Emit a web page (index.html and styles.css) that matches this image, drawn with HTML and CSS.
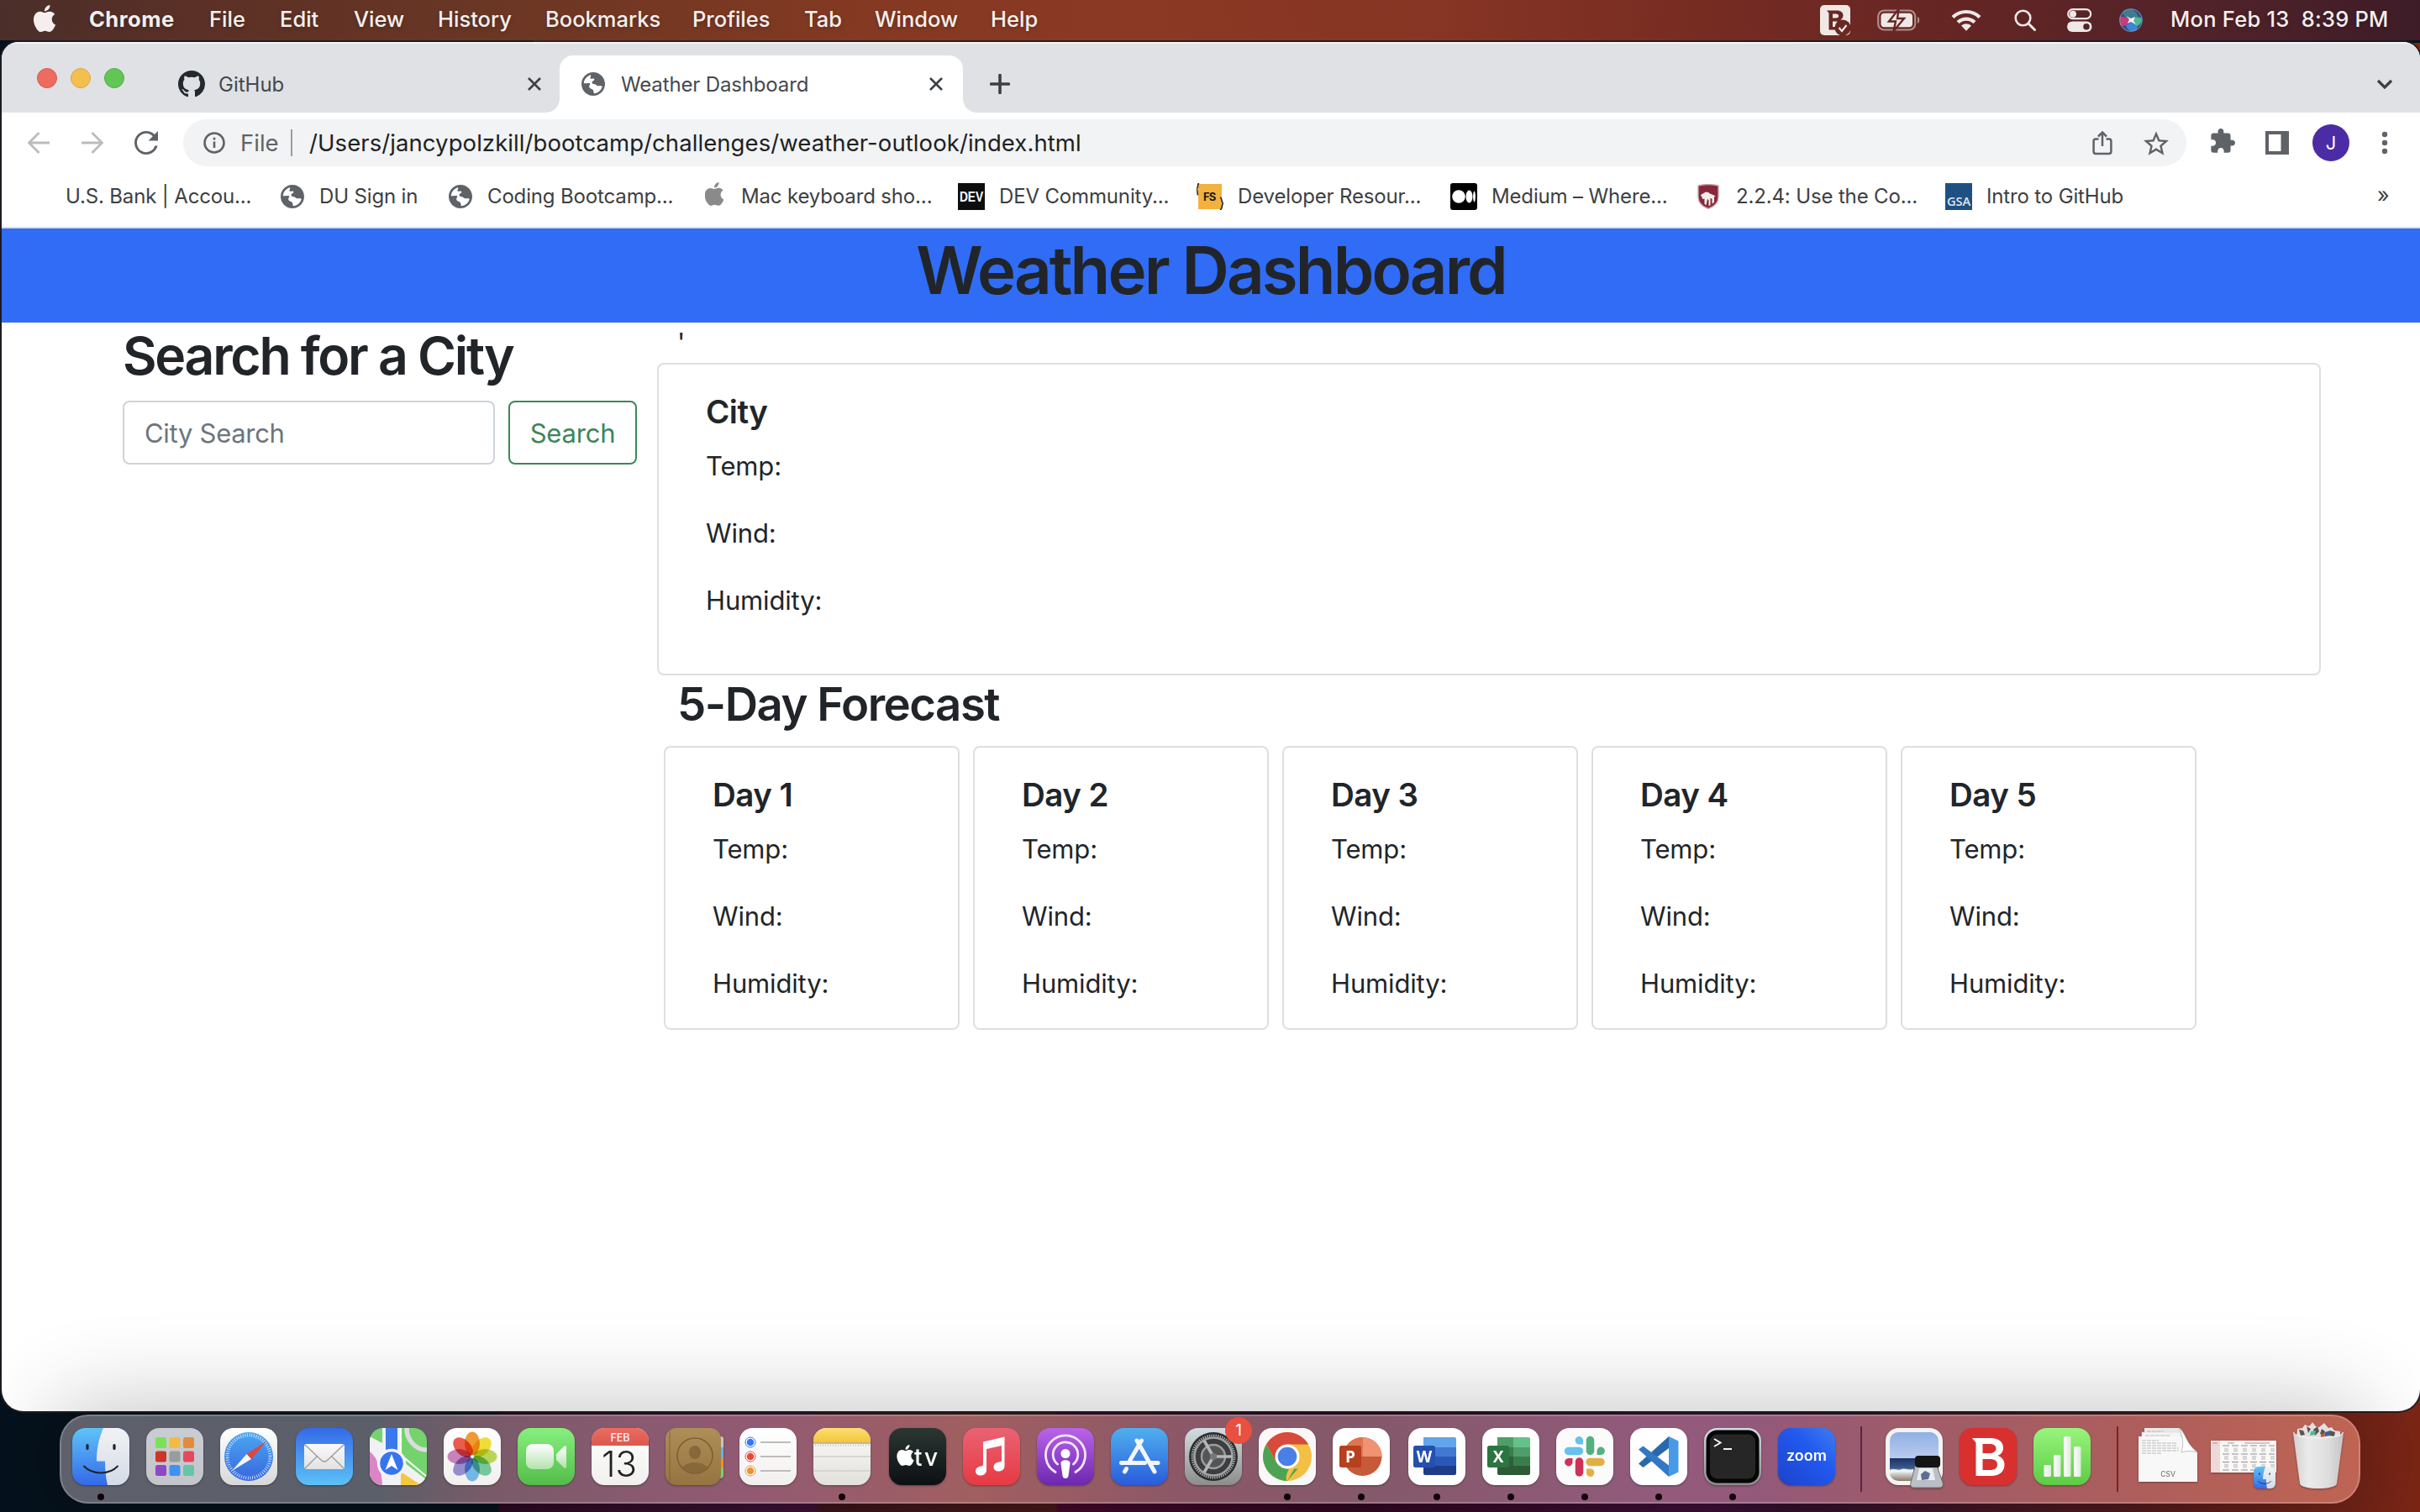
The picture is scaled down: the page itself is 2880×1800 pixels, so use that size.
FILE: index.html
```html
<!DOCTYPE html>
<html lang="en">
<head>
<meta charset="utf-8">
<title>Weather Dashboard</title>
<link rel="stylesheet" href="styles.css">
</head>
<body>
<svg class="defs" width="0" height="0" aria-hidden="true">
  <defs>
    <symbol id="apple" viewBox="0 0 24 24"><path d="M12.152 6.896c-.948 0-2.415-1.078-3.96-1.04-2.04.027-3.91 1.183-4.961 3.014-2.117 3.675-.546 9.103 1.519 12.09 1.013 1.454 2.208 3.09 3.792 3.039 1.52-.065 2.09-.987 3.935-.987 1.831 0 2.35.987 3.96.948 1.637-.026 2.676-1.48 3.676-2.948 1.156-1.688 1.636-3.325 1.662-3.415-.039-.013-3.182-1.221-3.22-4.857-.026-3.04 2.48-4.494 2.597-4.559-1.429-2.09-3.623-2.324-4.39-2.376-2-.156-3.675 1.09-4.61 1.09zM15.53 3.83c.843-1.012 1.4-2.427 1.245-3.83-1.207.052-2.662.805-3.532 1.818-.78.896-1.454 2.338-1.273 3.714 1.338.104 2.715-.688 3.559-1.701"/></symbol>
    <symbol id="globe" viewBox="2 2 20 20"><path d="M12 2C6.48 2 2 6.48 2 12s4.48 10 10 10 10-4.48 10-10S17.52 2 12 2zm.6 18c-.3-1.200-.2-2.100-.8-3-.7-1-2.300-.9-3-2-.5-.8-.2-1.800.4-2.400.5-.5.200-1.100-.6-1.300C7 11 5.600 11.500 4 11.500 4.200 8 6.600 5.200 9.800 4.300c.5.700.1 1.400-.3 2.100-.3.600.2 1.200.9 1.200.8 0 1.300-.4 2-.2.9.3.600 1.400-.1 1.800-.9.500-1.500 1-1.300 1.900.2.800 1.200.9 2.100 1 1.300.1 1.600 1.200 2.700 1.500.9.200 1.700-.3 2.600-.2.600.1.900.4 1.300.8-.9 3.300-3.700 5.600-7.100 5.800z"/></symbol>
    <symbol id="close" viewBox="0 0 16 16"><path d="M1 1l14 14M15 1L1 15" stroke="#3c4043" stroke-width="2.600" fill="none"/></symbol>
    <linearGradient id="finderL" x2="0" y2="1"><stop stop-color="#5ec4f8"/><stop offset="1" stop-color="#3469e8"/></linearGradient>
    <linearGradient id="finderR" x2="0" y2="1"><stop stop-color="#f2f2f4"/><stop offset="1" stop-color="#d3dbe6"/></linearGradient>
    <clipPath id="tile"><rect width="68" height="68" rx="15.500"/></clipPath>
    <clipPath id="orb"><circle cx="14" cy="14" r="14"/></clipPath>
    <symbol id="finder" viewBox="0 0 68 68">
      <g clip-path="url(#tile)"><rect width="68" height="68" fill="url(#finderL)"/><path d="M37 0C31 14 29 26 29 39.500h10C39 50 40 60 42 68h26V0z" fill="url(#finderR)"/></g>
      <g stroke="#1d2530" fill="none" stroke-linecap="round"><path d="M18 20.500v4M50 20.500v4" stroke-width="3.200"/><path d="M14 45.500c10 10.500 30 10.500 40 0" stroke-width="2"/></g>
    </symbol>
    <linearGradient id="gLaunch" x2="0" y2="1"><stop stop-color="#c9cdd2"/><stop offset="1" stop-color="#c4c5ca"/></linearGradient>
    <linearGradient id="gWhite" x2="0" y2="1"><stop stop-color="#fff"/><stop offset="1" stop-color="#d8d8d8"/></linearGradient>
    <linearGradient id="gPaper" x2="0" y2="1"><stop stop-color="#fff"/><stop offset="1" stop-color="#f1f0ee"/></linearGradient>
    <linearGradient id="gSafari" x2="0" y2="1"><stop stop-color="#4ba6f0"/><stop offset="1" stop-color="#3767df"/></linearGradient>
    <linearGradient id="gMail" x2="0" y2="1"><stop stop-color="#346ae9"/><stop offset="1" stop-color="#5dc1f6"/></linearGradient>
    <linearGradient id="gEnv" x2="0" y2="1"><stop stop-color="#fafafa"/><stop offset="1" stop-color="#e2e2e2"/></linearGradient>
    <linearGradient id="gFace" x2="0" y2="1"><stop stop-color="#86ef7e"/><stop offset="1" stop-color="#54bd4a"/></linearGradient>
    <linearGradient id="gCam" x2="0" y2="1"><stop stop-color="#fff"/><stop offset="1" stop-color="#b4e2ad"/></linearGradient>
    <linearGradient id="gRed" x2="0" y2="1"><stop stop-color="#ed6b60"/><stop offset="1" stop-color="#d9594e"/></linearGradient>
    <linearGradient id="gContacts" x2="0" y2="1"><stop stop-color="#ae8e59"/><stop offset="1" stop-color="#96743f"/></linearGradient>
    <linearGradient id="gNotes" x2="0" y2="1"><stop stop-color="#fbdf72"/><stop offset="1" stop-color="#f4c437"/></linearGradient>
    <linearGradient id="gNotePaper" x2="0" y2="1"><stop stop-color="#fafaf8"/><stop offset="1" stop-color="#e2e1dc"/></linearGradient>
    <linearGradient id="gTv" x2="0" y2="1"><stop stop-color="#2b3632"/><stop offset="1" stop-color="#0c1013"/></linearGradient>
    <linearGradient id="gMusic" x2="0" y2="1"><stop stop-color="#ea6273"/><stop offset="1" stop-color="#e63a42"/></linearGradient>
    <linearGradient id="gPod" x2="0" y2="1"><stop stop-color="#b964ea"/><stop offset="1" stop-color="#6d27ae"/></linearGradient>
    <linearGradient id="gStore" x2="0" y2="1"><stop stop-color="#4fb0ee"/><stop offset="1" stop-color="#2a5bdc"/></linearGradient>
    <linearGradient id="gGear" x2="0" y2="1"><stop stop-color="#d3dde2"/><stop offset="1" stop-color="#8d8d8b"/></linearGradient>
    <linearGradient id="gZoom" x1="1" x2="0" y2="1"><stop stop-color="#3f7ef0"/><stop offset=".4" stop-color="#2259ee"/><stop offset="1" stop-color="#1c43ca"/></linearGradient>
    <linearGradient id="gNum" x2="0" y2="1"><stop stop-color="#98f57c"/><stop offset="1" stop-color="#5ccb45"/></linearGradient>
    <linearGradient id="gBar" x2="1" y2="0"><stop stop-color="#fff"/><stop offset="1" stop-color="#dcebd9"/></linearGradient>
    <linearGradient id="gSky" x2="0" y2="1"><stop stop-color="#8fb0e4"/><stop offset=".53" stop-color="#b9cbee"/><stop offset=".54" stop-color="#1c3363"/><stop offset=".74" stop-color="#3b5a8c"/><stop offset=".82" stop-color="#dfe4e6"/><stop offset="1" stop-color="#8a7a64"/></linearGradient>
    <linearGradient id="gTrash" x2="1" y2="0"><stop stop-color="#d2d0d0"/><stop offset=".3" stop-color="#ebebeb"/><stop offset=".7" stop-color="#dedddd"/><stop offset="1" stop-color="#c6c4c4"/></linearGradient>
  </defs>
</svg>

<div class="desktop">
  <header class="menubar">
    <svg class="menu-apple" viewBox="2.500 0 19 24"><use href="#apple" width="24" height="24"/></svg>
    <b>Chrome</b><span>File</span><span>Edit</span><span>View</span><span>History</span><span>Bookmarks</span><span>Profiles</span><span>Tab</span><span>Window</span><span>Help</span>
    <svg class="status" width="36" height="36" viewBox="0 0 36 36"><rect width="36" height="36" rx="5" fill="#efe8e6"/><path fill-rule="evenodd" fill="#6a2823" d="M8 6.500h12c5 0 7.500 2.500 7.500 6 0 2.300-1.300 4-3.200 4.800 2.900.8 4.400 2.900 4.400 5.500 0 4.200-3 6.700-8 6.700H10.500V9.500zM15 10.500v5h4c2 0 3.200-.9 3.200-2.500s-1.200-2.500-3.200-2.500zM15 19.500V26h4.500c2.300 0 3.800-1.200 3.800-3.200s-1.500-3.300-3.800-3.300z"/><circle cx="27" cy="27" r="9.500" fill="#6a2823"/><path d="M22.500 27l3.500 4 5.500-7" fill="none" stroke="#efe8e6" stroke-width="2.200"/></svg>
    <svg class="status" width="52" height="26" viewBox="0 0 52 26"><rect x="1.200" y="1.500" width="44" height="23" rx="7" fill="none" stroke="#b08d88" stroke-width="2.200"/><rect x="4.500" y="4.800" width="37.500" height="16.400" rx="4" fill="#efe8e6"/><path d="M48 9c3 1 3 7 0 8z" fill="#b08d88"/><path d="M25.500 0L14 14.500h8L19.500 26 32 11h-8z" fill="#efe8e6" stroke="#642523" stroke-width="2.400"/></svg>
    <svg class="status" width="36" height="26" viewBox="0 0 36 26"><g fill="none" stroke="#efe8e6" stroke-width="4.200"><path d="M2 9.500a23 23 0 0 1 32 0"/><path d="M8 15.600a14.500 14.500 0 0 1 20 0"/></g><path d="M12 19.500a9 9 0 0 1 12 0l-6 6.200z" fill="#efe8e6"/></svg>
    <svg class="status" width="26" height="26" viewBox="0 0 26 26"><circle cx="10.500" cy="10.500" r="8.800" fill="none" stroke="#efe8e6" stroke-width="2.600"/><path d="M17 17l7.500 7.500" stroke="#efe8e6" stroke-width="3" stroke-linecap="round"/></svg>
    <svg class="status" width="30" height="28" viewBox="0 0 30 28"><rect x="1.200" y="1.200" width="27" height="11" rx="5.500" fill="none" stroke="#efe8e6" stroke-width="2.200"/><circle cx="7" cy="6.700" r="4" fill="#efe8e6"/><rect y="15.500" width="29.500" height="12.500" rx="6.200" fill="#efe8e6"/><circle cx="23" cy="21.700" r="3.800" fill="#57232a"/></svg>
    <svg class="status" width="28" height="28" viewBox="0 0 28 28"><g clip-path="url(#orb)"><rect width="28" height="28" fill="#324f86"/><path d="M0 10c5-1 10 1 14 4-3 6-9 8-13 6z" fill="#c83d78"/><path d="M4 2c10-4 16 1 19 8-4 3-8 4-11 3C7 10 4 8 4 2z" fill="#3f7c8c"/><path d="M8 20c4-1 6-4 7-6 5 1 8 5 6 12-6 3-11 0-13-6z" fill="#3d86d6"/><path d="M15 13c4-3 8-3 12-1 0 5-3 8-6 9-3-2-5-5-6-8z" fill="#4fb893"/></g><path d="M8 9l6 3 5-2-2 5 3 4-6-3-4 2 2-5z" fill="#fff" opacity=".9"/><circle cx="14" cy="14" r="13.300" fill="none" stroke="#7c8fb0" stroke-width="1"/></svg>
    <span class="clock">Mon Feb 13&nbsp; 8:39 PM</span>
  </header>

  <main class="window">
    <div class="tabstrip">
      <div class="lights"><i class="red"></i><i class="amber"></i><i class="green"></i></div>
      <div class="tab">
        <svg width="32" height="32" viewBox="0 0 16 16" fill="#24292f"><path d="M8 0C3.580 0 0 3.580 0 8c0 3.540 2.290 6.530 5.470 7.590.4.070.55-.17.55-.38 0-.19-.01-.82-.01-1.490-2.010.37-2.530-.49-2.690-.94-.09-.23-.48-.94-.82-1.130-.28-.15-.68-.52-.01-.53.630-.01 1.080.58 1.230.82.720 1.210 1.870.87 2.330.66.070-.52.280-.87.510-1.070-1.780-.2-3.640-.89-3.640-3.950 0-.87.310-1.590.820-2.150-.08-.2-.36-1.020.080-2.120 0 0 .67-.21 2.200.82.640-.18 1.320-.27 2-.27s1.360.09 2 .27c1.530-1.040 2.200-.82 2.200-.82.440 1.100.160 1.920.080 2.120.510.560.820 1.270.820 2.150 0 3.070-1.870 3.750-3.650 3.950.290.250.540.730.540 1.480 0 1.070-.01 1.930-.01 2.200 0 .210.150.460.550.380A8.010 8.010 0 0 0 16 8c0-4.420-3.580-8-8-8z"/></svg>
        <span class="tab-title">GitHub</span>
        <svg width="16" height="16"><use href="#close"/></svg>
      </div>
      <div class="tab active">
        <svg width="28" height="28" fill="#5f6368"><use href="#globe"/></svg>
        <span class="tab-title">Weather Dashboard</span>
        <svg width="16" height="16"><use href="#close"/></svg>
      </div>
      <svg class="plus" width="24" height="24" viewBox="0 0 24 24"><path d="M12 1.500v21M1.500 12h21" stroke="#3c4043" stroke-width="3.600" stroke-linecap="round"/></svg>
      <svg class="chevron" width="20" height="12" viewBox="0 0 20 12"><path d="M2 2l8 8 8-8" fill="none" stroke="#3c4043" stroke-width="3.200"/></svg>
    </div>

    <div class="toolbar">
      <svg width="28" height="28" viewBox="0 0 28 28"><path d="M27 14H3M14.500 2L2.500 14l12 12" fill="none" stroke="#babcbe" stroke-width="2.800"/></svg>
      <svg width="28" height="28" viewBox="0 0 28 28"><path d="M1 14h24M13.500 2l12 12-12 12" fill="none" stroke="#babcbe" stroke-width="2.800"/></svg>
      <svg width="28" height="28" viewBox="4 4 16 16"><path fill="#5f6368" d="M17.650 6.350A7.950 7.950 0 0 0 12 4c-4.420 0-7.990 3.580-7.990 8s3.570 8 7.990 8c3.730 0 6.840-2.550 7.730-6h-1.780A6.280 6.280 0 0 1 12 18.400c-3.500 0-6.300-2.890-6.300-6.400s2.800-6.400 6.300-6.400c1.760 0 3.340.79 4.420 1.980L13.500 10.500H20V4l-2.350 2.350z"/></svg>
      <div class="omnibox">
        <svg width="26" height="26" viewBox="0 0 26 26" fill="none" stroke="#5f6368" stroke-width="2.600"><circle cx="13" cy="13" r="11.500"/><path d="M13 11.500v7.500M13 6.800v2.800"/></svg>
        <span class="scheme">File</span>
        <i class="divider"></i>
        <span class="url">/Users/jancypolzkill/bootcamp/challenges/weather-outlook/index.html</span>
        <svg width="24" height="30" viewBox="0 0 24 30" fill="none" stroke="#5f6368" stroke-width="2.500"><path d="M7.500 10.500H4a2.400 2.400 0 0 0-2.400 2.400v12.700A2.400 2.400 0 0 0 4 28h16a2.400 2.400 0 0 0 2.400-2.400V12.900A2.400 2.400 0 0 0 20 10.500h-3.500M12 19V3M7 7.500l5-5 5 5"/></svg>
        <svg width="30" height="29" viewBox="2 2 20 19" fill="#5f6368"><path d="M22 9.240l-7.190-.62L12 2 9.190 8.630 2 9.240l5.460 4.730L5.820 21 12 17.270 18.180 21l-1.630-7.030L22 9.240zM12 15.400l-3.760 2.270 1-4.280-3.320-2.880 4.380-.38L12 6.100l1.710 4.040 4.380.38-3.320 2.880 1 4.280L12 15.400z"/></svg>
      </div>
      <svg class="puzzle" width="30" height="30" viewBox="1 1 22 22" fill="#5f6368"><path d="M20.500 11H19V7c0-1.100-.9-2-2-2h-4V3.500C13 2.120 11.880 1 10.500 1S8 2.120 8 3.500V5H4c-1.100 0-1.990.9-1.990 2v3.800H3.500c1.490 0 2.700 1.210 2.700 2.700s-1.210 2.700-2.700 2.700H2V20c0 1.100.9 2 2 2h3.800v-1.500c0-1.490 1.210-2.700 2.700-2.700 1.490 0 2.700 1.210 2.700 2.700V22H17c1.100 0 2-.9 2-2v-4h1.500c1.380 0 2.500-1.120 2.500-2.500S21.880 11 20.500 11z"/></svg>
      <svg width="28" height="28" viewBox="0 0 28 28"><path fill-rule="evenodd" fill="#5f6368" d="M0 0h28v28H0zM4 4v20h14.500V4z"/></svg>
      <span class="avatar">J</span>
      <svg width="8" height="28" viewBox="0 0 8 28" fill="#5f6368"><circle cx="4" cy="4" r="3.200"/><circle cx="4" cy="14" r="3.200"/><circle cx="4" cy="24" r="3.200"/></svg>
    </div>

    <nav class="bookmarks">
      <span>U.S. Bank | Accou...</span>
      <svg width="30" height="28" fill="#5f6368"><use href="#globe"/></svg><span>DU Sign in</span>
      <svg width="30" height="28" fill="#5f6368"><use href="#globe"/></svg><span>Coding Bootcamp...</span>
      <svg class="bm-apple" width="22" height="28" viewBox="2.500 0 19 24" fill="#8a8a8a"><use href="#apple" width="24" height="24"/></svg><span>Mac keyboard sho...</span>
      <svg width="32" height="32" viewBox="0 0 32 32"><rect width="32" height="32" fill="#0c0d0e"/><text x="2" y="22" textLength="28" lengthAdjust="spacingAndGlyphs" font-family="Liberation Sans" font-weight="700" font-size="17" fill="#fff">DEV</text></svg><span>DEV Community...</span>
      <svg width="32" height="32" viewBox="0 0 32 32"><rect x="2" y="1" width="28" height="30" fill="#f3b13e"/><path d="M3 0C0 1 3 5 0 7c2 2 0 6 2 7M28 17c3 1 1 5 3.500 7-2 2 0 6-3.500 8" fill="none" stroke="#222" stroke-width="1.600"/><text x="8" y="21" font-family="Inter" font-weight="700" font-size="13" textLength="15" fill="#1b1b1b">FS</text></svg><span>Developer Resour...</span>
      <svg width="32" height="32" viewBox="0 0 32 32"><rect width="32" height="32" rx="3"/><g fill="#fff"><circle cx="10" cy="16" r="7.800"/><ellipse cx="22.500" cy="16" rx="4" ry="7.400"/><ellipse cx="28.500" cy="16" rx="1.400" ry="6.500"/></g></svg><span>Medium – Where...</span>
      <svg width="26" height="30" viewBox="0 0 26 30"><path d="M1 2C8 .2 18 .2 25 2v13c0 7-5 12-12 14.500C6 27 1 22 1 15z" fill="#86283a" stroke="#c9a7ac" stroke-width="1.400"/><path d="M4 13l6-3.500 3 .5 2 1.500 7 3-2 .8v6.500l-2.500 2v-6l-2-1v8.500l-2 1v-7l-1.500-1.500-1.500 7.500-2-1.500v-6.500l-2 1z" fill="#f3eeee"/></svg><span>2.2.4: Use the Co...</span>
      <svg width="32" height="32" viewBox="0 0 32 32"><rect width="32" height="32" fill="#1f5083"/><text x="2" y="27" textLength="28" lengthAdjust="spacingAndGlyphs" font-family="Open Sans" font-weight="600" font-size="14.500" fill="#dfe8f0">GSA</text></svg><span>Intro to GitHub</span>
      <span class="more">»</span>
    </nav>

    <section class="page">
      <h1>Weather Dashboard</h1>
      <div class="columns">
        <div class="search">
          <h2>Search for a City</h2>
          <form class="search-form">
            <input type="text" placeholder="City Search">
            <button type="button">Search</button>
          </form>
        </div>
        <div class="results">
          <div class="stray">'</div>
          <article class="card current"><h5>City</h5><p>Temp:</p><p>Wind:</p><p>Humidity:</p></article>
          <h3>5-Day Forecast</h3>
          <div class="forecast">
            <article class="card"><h5>Day 1</h5><p>Temp:</p><p>Wind:</p><p>Humidity:</p></article>
            <article class="card"><h5>Day 2</h5><p>Temp:</p><p>Wind:</p><p>Humidity:</p></article>
            <article class="card"><h5>Day 3</h5><p>Temp:</p><p>Wind:</p><p>Humidity:</p></article>
            <article class="card"><h5>Day 4</h5><p>Temp:</p><p>Wind:</p><p>Humidity:</p></article>
            <article class="card"><h5>Day 5</h5><p>Temp:</p><p>Wind:</p><p>Humidity:</p></article>
          </div>
        </div>
      </div>
    </section>
  </main>

  <footer class="dock">
    <div class="app running"><svg viewBox="0 0 68 68"><use href="#finder"/></svg></div>
    <div class="app"><svg viewBox="0 0 68 68"><rect width="68" height="68" rx="15.500" fill="url(#gLaunch)"/><rect x="11" y="11" width="13" height="13" rx="2.500" fill="#79e355"/><rect x="27.500" y="11" width="13" height="13" rx="2.500" fill="#f2bb42"/><rect x="44" y="11" width="13" height="13" rx="2.500" fill="#e38b38"/><rect x="11" y="27.500" width="13" height="13" rx="2.500" fill="#cc3527"/><rect x="27.500" y="27.500" width="13" height="13" rx="2.500" fill="#979c9d"/><rect x="44" y="27.500" width="13" height="13" rx="2.500" fill="#e8485d"/><rect x="11" y="44" width="13" height="13" rx="2.500" fill="#9046c6"/><rect x="27.500" y="44" width="13" height="13" rx="2.500" fill="#3d94f0"/><rect x="44" y="44" width="13" height="13" rx="2.500" fill="#65c5a5"/></svg></div>
    <div class="app"><svg viewBox="0 0 68 68"><rect width="68" height="68" rx="15.500" fill="url(#gWhite)"/><circle cx="34" cy="34" r="29" fill="url(#gSafari)"/><circle cx="34" cy="34" r="25.500" fill="none" stroke="#d4e8fb" stroke-width="4" stroke-dasharray=".9 1.770"/><path d="M55 16L31.500 31l5.500 6z" fill="#e2453a"/><path d="M14 51l17.500-20 5.500 6z" fill="#f4f6f8"/></svg></div>
    <div class="app shift"><svg viewBox="0 0 68 68"><rect width="68" height="68" rx="15.500" fill="url(#gMail)"/><rect x="10" y="19" width="48" height="30" rx="3" fill="url(#gEnv)"/><path d="M11 20l19 18c2.500 2.500 5.500 2.500 8 0l19-18M11 48l14-14M57 48L43 34" fill="none" stroke="#9c9c9c" stroke-width="1.300"/></svg></div>
    <div class="app"><svg viewBox="0 0 68 68"><g clip-path="url(#tile)"><rect width="68" height="68" fill="#74d36c"/><path d="M0 10l15 8V0h22v38l31 24v6H0z" fill="#f1f1f3"/><path d="M0 28c10 8 14 22 15 40H0z" fill="#dd83c8"/><path d="M37 52l24 16H37z" fill="#f4c83e"/><path d="M19 0h14v36H19z" fill="#3a79ec"/><path d="M44 0c0 14 10 26 24 26" fill="none" stroke="#dcdce0" stroke-width="5.500"/><path d="M37 0v32l31 26" fill="none" stroke="#fff" stroke-width="2"/></g><circle cx="26" cy="42" r="15.500" fill="#3774ee" stroke="#f2f3f6" stroke-width="3.500"/><path d="M26 31l7.500 19-7.500-5-7.500 5z" fill="#fff"/></svg></div>
    <div class="app"><svg viewBox="0 0 68 68"><rect width="68" height="68" rx="15.500" fill="url(#gPaper)"/><g class="petals"><ellipse cx="34" cy="18.500" rx="9" ry="14" fill="#f09a34"/><ellipse cx="34" cy="18.500" rx="9" ry="14" fill="#efdc3a" transform="rotate(45 34 34)"/><ellipse cx="34" cy="18.500" rx="9" ry="14" fill="#b9d558" transform="rotate(90 34 34)"/><ellipse cx="34" cy="18.500" rx="9" ry="14" fill="#76c79a" transform="rotate(135 34 34)"/><ellipse cx="34" cy="18.500" rx="9" ry="14" fill="#74b6e6" transform="rotate(180 34 34)"/><ellipse cx="34" cy="18.500" rx="9" ry="14" fill="#988dcc" transform="rotate(225 34 34)"/><ellipse cx="34" cy="18.500" rx="9" ry="14" fill="#c782bc" transform="rotate(270 34 34)"/><ellipse cx="34" cy="18.500" rx="9" ry="14" fill="#ea5c4e" transform="rotate(315 34 34)"/></g><circle cx="34" cy="34" r="1.700" fill="#fff"/></svg></div>
    <div class="app"><svg viewBox="0 0 68 68"><rect width="68" height="68" rx="15.500" fill="url(#gFace)"/><rect x="10" y="19" width="33" height="30" rx="8" fill="url(#gCam)"/><path d="M46 31l9-9c1.500-1.500 3-1 3 1v23c0 2-1.500 2.500-3 1l-9-9z" fill="url(#gCam)"/></svg></div>
    <div class="app"><svg viewBox="0 0 68 68"><rect width="68" height="68" rx="15.500" fill="url(#gPaper)"/><path d="M0 21v-5.500A15.500 15.500 0 0 1 15.500 0h37A15.500 15.500 0 0 1 68 15.500V21z" fill="url(#gRed)"/><text x="34" y="16" text-anchor="middle" font-family="Inter" font-weight="600" font-size="12.500" fill="#fbe9e7">FEB</text><text x="33" y="57.500" text-anchor="middle" font-family="Inter" font-weight="300" font-size="42" textLength="42" lengthAdjust="spacingAndGlyphs" fill="#222">13</text></svg></div>
    <div class="app"><svg viewBox="0 0 70 68"><path d="M60 10h6a3 3 0 0 1 3 3v10h-9z" fill="#c9c6bf"/><path d="M60 23h9v13h-9z" fill="#5db5ee"/><path d="M60 36h9v12h-9z" fill="#ee8f2f"/><path d="M60 48h9v8a4 4 0 0 1-4 4h-5z" fill="#72d374"/><rect width="66" height="68" rx="13" fill="url(#gContacts)"/><path d="M5 4v60" stroke="#846535"/><circle cx="35" cy="33" r="21" fill="none" stroke="#7d5f30" stroke-width="1.500"/><ellipse cx="35" cy="29" rx="7" ry="8" fill="#87683a"/><path d="M20 47c6-8 24-8 30 0-7 9-23 9-30 0z" fill="#87683a"/></svg></div>
    <div class="app tight"><svg viewBox="0 0 68 68"><rect width="68" height="68" rx="15.500" fill="url(#gPaper)"/><g stroke="#fff" stroke-width="1.500"><circle cx="13" cy="17" r="5" fill="#3478f6"/><circle cx="13" cy="34" r="5" fill="#e5493a"/><circle cx="13" cy="51" r="5" fill="#ec9431"/></g><g fill="none" stroke-width="1"><circle cx="13" cy="17" r="6" stroke="#3478f6"/><circle cx="13" cy="34" r="6" stroke="#e5493a"/><circle cx="13" cy="51" r="6" stroke="#ec9431"/></g><path d="M25 17h36M25 34h36M25 51h36" stroke="#bdbdbd" stroke-width="1.800"/></svg></div>
    <div class="app running"><svg viewBox="0 0 68 68"><rect width="68" height="68" rx="15.500" fill="url(#gNotePaper)"/><path d="M0 17.500v-2A15.500 15.500 0 0 1 15.500 0h37A15.500 15.500 0 0 1 68 15.500v2z" fill="url(#gNotes)"/><path d="M0 18h68" stroke="#b0a98e" stroke-width="1.300"/><path d="M2 20.500h64" stroke="#b5b5b2" stroke-width="1.500" stroke-dasharray="1 2"/><path d="M0 34h68M0 51h68" stroke="#cfcfd0" stroke-width="1.500"/></svg></div>
    <div class="app shift"><svg viewBox="0 0 68 68"><rect width="68" height="68" rx="15.500" fill="url(#gTv)"/><svg x="9" y="20" width="21" height="25" viewBox="2.500 0 19 24" fill="#fff"><use href="#apple" width="24" height="24"/></svg><text x="30" y="44.500" textLength="28" font-family="Inter" font-weight="500" font-size="28" fill="#fff">tv</text></svg></div>
    <div class="app"><svg viewBox="0 0 68 68"><rect width="68" height="68" rx="15.500" fill="url(#gMusic)"/><path d="M24 16.500L49.500 10.500V45c0 4-3 6.500-7 6.500-3.500 0-6-2-6-5 0-3.500 2.500-5.500 6.500-6 2.500-.4 3-.8 3-2.800V21l-18 4v25c0 4-3 6.500-7 6.500-3.500 0-6-2-6-5 0-3.500 2.500-5.500 6.500-6 2-.3 2.500-1 2.500-2.800z" fill="#fff"/></svg></div>
    <div class="app"><svg viewBox="0 0 68 68"><rect width="68" height="68" rx="15.500" fill="url(#gPod)"/><g fill="none" stroke="#f2e6fb" stroke-width="2.800" stroke-linecap="round"><path d="M22 52.500a23.500 23.500 0 1 1 24 0"/><path d="M24.500 43a14.800 14.800 0 1 1 19 0"/></g><circle cx="34" cy="30.500" r="5.500" fill="#fff"/><path d="M28.500 42c0-5 11-5 11 0l-2 15c-.5 4-6.500 4-7 0z" fill="#fff"/></svg></div>
    <div class="app"><svg viewBox="0 0 68 68"><rect width="68" height="68" rx="15.500" fill="url(#gStore)"/><g stroke="#f1f6fc" stroke-width="5" stroke-linecap="round"><path d="M36.500 15L22.500 39M31 15l21 37M12.500 41.500h28M47 41.500h9M18.500 48.500l-2 3.500"/></g></svg></div>
    <div class="app"><svg viewBox="0 0 68 68"><rect width="68" height="68" rx="15.500" fill="url(#gGear)"/><circle cx="34" cy="34" r="29" fill="#2a2b2b"/><circle cx="34" cy="34" r="25" fill="none" stroke="#a9adaf" stroke-width="3" stroke-dasharray="1.400 1.200"/><circle cx="34" cy="34" r="22.500" fill="#3c3d3e" stroke="#9fa3a5" stroke-width="2.500"/><circle cx="34" cy="34" r="14" fill="#555" stroke="#999d9f" stroke-width="2.500"/><path d="M34 34h22M34 34L23 15M34 34L23 53" stroke="#b4b8ba" stroke-width="3.500"/><circle cx="34" cy="34" r="4" fill="#777"/></svg><span class="badge">1</span></div>
    <div class="app running"><svg viewBox="0 0 68 68"><rect width="68" height="68" rx="15.500" fill="#f9f7f7"/><circle cx="34" cy="34" r="29" fill="#f3c043"/><path d="M8.900 19.500A29 29 0 0 1 59.100 19.500H34l-12.600 21.800z" fill="#d84b3c"/><path d="M8.900 19.500L21.400 41.300 34 48.500h12.600L34 63A29 29 0 0 1 8.900 19.500z" fill="#4ea352"/><path d="M46.600 41.300L34 63c-3-3-1-8 2-14.500z" fill="#f3c043"/><circle cx="34" cy="34" r="14.500" fill="#fff"/><circle cx="34" cy="34" r="11.300" fill="#4a7fe8"/></svg></div>
    <div class="app running"><svg viewBox="0 0 68 68"><rect width="68" height="68" rx="15.500" fill="#fff"/><circle cx="35.500" cy="34" r="23" fill="#c65a39"/><path d="M35.500 34V11a23 23 0 0 1 23 23z" fill="#ef9372"/><path d="M35.500 34V11a23 23 0 0 0-23 23z" fill="#df7450"/><rect x="8" y="21" width="26" height="26" rx="2.500" fill="#b7401f"/><text x="21" y="41" text-anchor="middle" font-family="Open Sans" font-weight="700" font-size="19" fill="#fff">P</text></svg></div>
    <div class="app running shift"><svg viewBox="0 0 68 68"><rect width="68" height="68" rx="15.500" fill="#fff"/><path d="M18 11h37a2 2 0 0 1 2 2v10H18z" fill="#62a5ea"/><path d="M18 23h39v11H18z" fill="#4178d0"/><path d="M18 34h39v11H18z" fill="#2b57b8"/><path d="M18 45h39v9a2 2 0 0 1-2 2H20a2 2 0 0 1-2-2z" fill="#1e3c89"/><rect x="6" y="21" width="26" height="26" rx="2.500" fill="#2450af"/><text x="19" y="41" text-anchor="middle" font-family="Open Sans" font-weight="700" font-size="19" fill="#fff">W</text></svg></div>
    <div class="app running"><svg viewBox="0 0 68 68"><rect width="68" height="68" rx="15.500" fill="#fff"/><path d="M18 11h19v12H18z" fill="#4f9e6a"/><path d="M37 11h18a2 2 0 0 1 2 2v10H37z" fill="#65c18a"/><path d="M18 23h19v11H18z" fill="#377e4b"/><path d="M37 23h20v11H37z" fill="#4f9e6a"/><path d="M18 34h19v11H18z" fill="#2f5f3b"/><path d="M37 34h20v11H37z" fill="#377e4b"/><path d="M18 45h39v9a2 2 0 0 1-2 2H20a2 2 0 0 1-2-2z" fill="#2f5a38"/><rect x="6" y="21" width="26" height="26" rx="2.500" fill="#2c7440"/><text x="19" y="41" text-anchor="middle" font-family="Open Sans" font-weight="700" font-size="19" fill="#fff">X</text></svg></div>
    <div class="app running"><svg viewBox="0 0 68 68"><rect width="68" height="68" rx="15.500" fill="#fcfbfb"/><g stroke-width="9.500" stroke-linecap="round"><path d="M14.500 27.500h13" stroke="#67c1ec"/><path d="M40.500 14.500v13" stroke="#54b080"/><path d="M40 40.500h13" stroke="#e0b045"/><path d="M27.500 40v13" stroke="#cf3058"/></g><path d="M32 19.500V14.500a4.700 4.700 0 1 0-4.700 5z" fill="#67c1ec"/><path d="M48.500 32h5a4.700 4.700 0 1 0-5-4.700z" fill="#54b080"/><path d="M36 48.500v5a4.700 4.700 0 1 0 4.700-5z" fill="#e0b045"/><path d="M19.500 36h-5a4.700 4.700 0 1 0 5 4.700z" fill="#cf3058"/></svg></div>
    <div class="app running"><svg viewBox="0 0 68 68"><rect width="68" height="68" rx="15.500" fill="#fff"/><path d="M10 42.500L46 10v14L15.500 47z" fill="#2a68ad"/><path d="M10 25.500l5.500-4L46 44.500V58z" fill="#3378c5"/><path d="M46 10l11.500 5.500v37L46 58z" fill="#489ae8"/></svg></div>
    <div class="app running"><svg viewBox="0 0 68 68"><rect width="68" height="68" rx="15.500" fill="url(#gGear)"/><rect x="2.500" y="2.500" width="63" height="63" rx="13" fill="#050505"/><rect x="7" y="7.500" width="54" height="53" rx="8.500" fill="#262626"/><path d="M12 13l7.500 4.500L12 22" fill="none" stroke="#f4f4f4" stroke-width="2"/><path d="M23 25h10" stroke="#f4f4f4" stroke-width="2"/></svg></div>
    <div class="app"><svg viewBox="0 0 68 68"><rect width="68" height="68" rx="15.500" fill="url(#gZoom)"/><text x="10" y="39" textLength="48" lengthAdjust="spacingAndGlyphs" font-family="Inter" font-weight="600" font-size="17" fill="#fff">zoom</text></svg></div>
    <i class="rule rule-a"></i>
    <div class="app"><svg viewBox="0 0 68 68"><rect width="68" height="68" rx="15.500" fill="#f4f3f1"/><rect x="5" y="5" width="58" height="58" rx="10" fill="url(#gSky)"/><path d="M5 50c6-3 10 2 14-1 4-2 8 2 14 0v3c-8 2-16-1-28 2z" fill="#eef2f4"/><path d="M36 42h24l8 23c1 4-1 6-4 6H34c-3 0-5-2-4-6z" fill="#b9bfc4" stroke="#6d7377"/><path d="M40 48h16l3 14H37z" fill="#e8edf2"/><path d="M42 55l5-4 6 3-2 7-8 1z" fill="#5a6f92"/><rect x="35" y="33" width="30" height="14" rx="4" fill="#151515"/></svg></div>
    <div class="app"><svg viewBox="0 0 68 68"><rect width="68" height="68" rx="15.500" fill="#d8302f"/><path fill-rule="evenodd" d="M15 12h22c10 0 15 5 15 11.500 0 4.500-2.500 8-6.500 9.500 5 1.500 8 5.500 8 10.500C53.500 51.500 48 57 38 57H19.500V17.500zM27.500 19v11h8c5 0 8-2 8-5.500s-3-5.500-8-5.500zM27.500 37v13h9c5 0 8.500-2 8.500-6.500S41.500 37 36.500 37z" fill="#fff"/></svg></div>
    <div class="app"><svg viewBox="0 0 68 68"><rect width="68" height="68" rx="15.500" fill="url(#gNum)"/><g fill="url(#gBar)"><rect x="12.500" y="44" width="8.500" height="14" rx="1.500"/><rect x="24" y="32" width="8.500" height="26" rx="1.500"/><rect x="36" y="10" width="8.500" height="48" rx="1.500"/><rect x="48" y="22" width="8.500" height="36" rx="1.500"/></g></svg></div>
    <i class="rule rule-b"></i>
    <div class="app doc"><svg viewBox="0 0 70 68"><path d="M7 0h42l6 12v40H7z" fill="#e9e8e8"/><path d="M4 5h46v50H4z" fill="#f4f4f4" stroke="#ddd" stroke-width=".6"/><path d="M0 10h50l20 19v35H0z" fill="#f8f8f8"/><path d="M48 0c7 3 9 20 22 29-7-2-13-2-19 0 3-9 2-20-3-29z" fill="#fff" stroke="#b5b3b3" stroke-width=".8"/><path d="M4 15h20M4 18h42M4 21h42M4 24h44M4 27h44M4 30h24M10 4h20M8 9h30" stroke="#b9b9b9" stroke-width="1.200" stroke-dasharray="5 1"/><text x="35" y="58" text-anchor="middle" font-family="Inter" font-size="8.500" fill="#666">CSV</text></svg></div>
    <div class="app minimized"><svg viewBox="0 0 78 58"><rect width="78" height="38" rx="1" fill="#fbf8f8"/><rect width="11" height="38" fill="#ecd9d8"/><path d="M2 3h6M20 3h8M40 3h30" stroke="#999" stroke-width="1"/><g stroke="#bdbdbd" stroke-width="5" stroke-dasharray="5 6"><path d="M16 11h60M16 20.500h60M16 30h60" opacity=".55"/></g><g stroke="#8d8d8d" stroke-width="1" stroke-dasharray="8 3"><path d="M14 6h62M14 16h62M14 25.500h62M14 35h40"/></g><use href="#finder" x="51" y="31" width="26" height="26"/></svg></div>
    <div class="app trash"><svg viewBox="0 0 60 80"><path d="M4 20L5 8l6-1 3-4 5 2 4-5 4 5 4 1 6-5 5 6 4-1 3 4 7 1v9z" fill="#e4e0de"/><g fill="#5a5352"><path d="M7 9l5 1 2 5-5 1zM16 5l5 3-3 5zM24 9l5-4 2 6-5 5zM34 8l4 3-1 6-5-3zM44 10l6 2-1 5-6-1z"/></g><path d="M21 11l6-1-1 5-6 1z" fill="#4cb8a4"/><path d="M38 12l6-2 0 6-6 1z" fill="#3a5f9c"/><path d="M33 15l4-2 1 4-5 1z" fill="#c4572f"/><path d="M0 13c0 7 60 7 60 0l-8 60c-1 8-43 8-44 0z" fill="url(#gTrash)"/><path d="M.5 12c0 9 59 9 59 0" fill="none" stroke="#f5f3f3" stroke-width="1.300"/></svg></div>
  </footer>
</div>
</body>
</html>
```
FILE: styles.css
```css
* { box-sizing: border-box; }
body { margin: 0; font-family: Inter, "Liberation Sans", sans-serif; color: #212529; }
svg { display: block; flex: none; }
.defs { position: absolute; }

.desktop {
  width: 2880px;
  height: 1800px;
  overflow: hidden;
  display: flex;
  flex-direction: column;
  background:
    linear-gradient(90deg, #041020 634px, #a5641f 634px, #7c2d12 1300px, #5d1d12 2000px, #07121f 2500px) 0 48px / 100% 3px no-repeat,
    linear-gradient(90deg, #05111c 0, #05111c 592px, #2a0a20 596px, #3b1235 970px, #38141a 976px, #45191a 1255px, #42092a 1260px, #2f0820 1600px, #3c1036 2035px, #30102c 2120px, #4b1a1e 2500px, #7c2615 2880px);
}

/* macOS menu bar */
.menubar {
  height: 48px;
  flex: none;
  display: grid;
  grid-template-columns: 66px 143px 84px 88px 100px 128px 175px 133px 84px 138px 987px 68px 88px 75px 63px 62px 61px 1fr;
  padding-left: 40px;
  align-items: center;
  font-size: 25.5px;
  font-weight: 500;
  line-height: 46px;
  white-space: nowrap;
  color: #f4efed;
  text-shadow: 0 2px 4px rgba(0, 0, 0, .25);
  background: linear-gradient(90deg, #4a2e29 0, #5c3026 250px, #6b3724 600px, #853922 1050px, #8b3924 1350px, #873524 1700px, #772c22 2020px, #632524 2350px, #4f222a 2650px, #3d1c27 2880px);
}
.menubar span, .menubar b { margin-top: -2px; }
.menubar b { font-weight: 700; letter-spacing: .5px; }
.menubar .clock { letter-spacing: .25px; }
.menu-apple { width: 26px; height: 32px; fill: #f4efed; margin-top: -4px; }

/* browser window */
.window {
  margin: 2px 0 0 2px;
  height: 1630px;
  flex: none;
  display: flex;
  flex-direction: column;
  overflow: hidden;
  border-radius: 20px 20px 26px 26px;
  background: #fff;
  box-shadow: 0 0 0 2px rgba(30, 30, 34, .9);
}
.tabstrip {
  height: 84px;
  flex: none;
  display: flex;
  align-items: flex-end;
  background: #dfe1e5;
  border-top: 2px solid #f4f5f6;
}
.lights { display: flex; gap: 16px; padding: 0 0 29px 42px; width: 188px; }
.lights i { width: 24px; height: 24px; border-radius: 50%; }
.lights .red { background: #ed6b5f; border: 1px solid #d55a4e; }
.lights .amber { background: #f5bf4f; border: 1px solid #dba73e; }
.lights .green { background: #62c655; border: 1px solid #50ad43; }
.tab {
  width: 476px;
  height: 68px;
  padding-left: 22px;
  display: grid;
  grid-template-columns: 48px 368px 1fr;
  align-items: center;
  position: relative;
  color: #45494d;
  font-size: 24px;
}
.tab.active {
  width: 480px;
  background: #fff;
  border-radius: 16px 16px 0 0;
  padding-left: 26px;
  grid-template-columns: 47px 367px 1fr;
  letter-spacing: -.15px;
}
.tab.active::before, .tab.active::after {
  content: "";
  position: absolute;
  bottom: 0;
  width: 16px;
  height: 16px;
}
.tab.active::before { left: -16px; background: radial-gradient(circle at 0 0, transparent 15.5px, #fff 16px); }
.tab.active::after { right: -16px; background: radial-gradient(circle at 100% 0, transparent 15.5px, #fff 16px); }
.plus { margin: 0 0 22px 32px; }
.chevron { margin: 0 32px 28px auto; }

.toolbar {
  height: 72px;
  flex: none;
  display: grid;
  grid-template-columns: 64px 64px 56px 2414px 66px 56px 82px 1fr;
  align-items: center;
  padding-left: 30px;
}
.puzzle { margin-top: -4px; }
.omnibox {
  width: 2384px;
  height: 56px;
  margin-left: 2px;
  border-radius: 28px;
  background: #f1f3f4;
  display: grid;
  grid-template-columns: 44px 60px 22px 2122px 61px 1fr;
  align-items: center;
  padding-left: 24px;
  font-size: 27.5px;
  white-space: nowrap;
}
.scheme { color: #5f6368; }
.url { color: #202124; letter-spacing: .08px; }
.divider { width: 2px; height: 32px; background: #9a9da1; }
.avatar {
  width: 44px;
  height: 44px;
  border-radius: 50%;
  background: #4c2ca4;
  color: #fff;
  font-size: 22px;
  line-height: 44px;
  text-align: center;
}

.bookmarks {
  height: 56px;
  margin-bottom: 8px;
  flex: none;
  display: grid;
  grid-template-columns: 255px 47px 153px 47px 259px 43px 258px 49px 235px 49px 253px 49px 245px 46px 249px 49px 465px 1fr;
  align-items: center;
  padding-left: 76px;
  font-size: 24px;
  letter-spacing: -.15px;
  white-space: nowrap;
  color: #3c4043;
}
.bookmarks > span { margin-top: -1px; }
.bm-apple { margin-top: -6px; }
.bookmarks > .more { font-size: 25px; margin-top: -4px; }

/* weather page */
.page { flex: 1; border-top: 2px solid #dadce0; }
.page h1, .page h2, .page h3, .page h5, .page p { margin: 0; white-space: nowrap; }
.page h1 {
  height: 112px;
  padding-top: 2px;
  background: #306cf5;
  font-size: 78px;
  font-weight: 560;
  letter-spacing: -2.9px;
  line-height: 96px;
  text-align: center;
}
.columns { display: flex; padding-left: 144px; }
.search { width: 636px; }
.page h2 { padding-top: 2px; font-size: 62.5px; font-weight: 560; letter-spacing: -2.3px; line-height: 75px; margin-bottom: 16px; }
.search-form { display: flex; gap: 16px; }
.search-form input {
  width: 443px;
  height: 76px;
  padding: 0 24px;
  border: 2px solid #ced4da;
  border-radius: 8px;
  font: 400 31px Inter, sans-serif;
  letter-spacing: -.3px;
}
.search-form input::placeholder { color: #6c757d; }
.search-form button {
  width: 153px;
  height: 76px;
  padding: 0;
  border: 2px solid #3d8658;
  border-radius: 8px;
  background: #fff;
  color: #3d8658;
  font: 400 31px Inter, sans-serif;
  letter-spacing: -.2px;
}
.stray { height: 48px; padding-left: 24px; font-size: 31px; line-height: 48px; }
.card { border: 2px solid #dfdfdf; border-radius: 8px; padding: 32px 56px 30px; font-size: 31px; line-height: 48px; letter-spacing: -.15px; }
.card.current { width: 1980px; height: 372px; }
.card h5 { font-size: 38.5px; font-weight: 560; line-height: 48px; margin-bottom: 17px; letter-spacing: -.5px; }
.card p + p { margin-top: 32px; }
.page h3 { padding: 2px 0 0 24px; font-size: 54.5px; font-weight: 560; line-height: 65px; margin-bottom: 17px; letter-spacing: -1.5px; }
.forecast { display: flex; gap: 16px; padding-left: 8px; }
.forecast .card { width: 352px; height: 338px; }

/* dock */
.dock {
  width: 2738px;
  height: 106px;
  margin: 4px 0 0 71px;
  flex: none;
  padding: 14px 0 0 13px;
  display: flex;
  gap: 20px;
  border: 2px solid rgba(255, 255, 255, .2);
  border-radius: 34px;
  background: linear-gradient(90deg, #5e606c 0, #5b5f69 380px, #795a68 510px, #8a5a70 700px, #925a72 830px, #a05f60 1090px, #8c5868 1330px, #84596a 1560px, #925a7c 1900px, #93597a 2020px, #a05c68 2220px, #ad5e5c 2470px, #bf6453 2738px) border-box;
  box-shadow: 0 0 110px 10px rgba(0, 0, 0, .24);
}
.app { width: 68px; height: 68px; position: relative; flex: none; }
.app > svg { width: 100%; height: 100%; overflow: visible; filter: drop-shadow(0 1px 1px rgba(0, 0, 0, .35)); }
.app.shift { margin-left: 2px; }
.app.tight { margin-left: -2px; }
.dock .app:nth-child(9) { width: 70px; }
.petals { isolation: isolate; }
.petals ellipse { mix-blend-mode: multiply; }
.running::after {
  content: "";
  position: absolute;
  left: 30px;
  top: 78px;
  width: 8px;
  height: 8px;
  border-radius: 50%;
  background: #120008;
}
.badge {
  position: absolute;
  right: -12px;
  top: -13px;
  width: 32px;
  height: 32px;
  border-radius: 50%;
  background: #e9503f;
  color: #fff;
  font-size: 19px;
  line-height: 32px;
  text-align: center;
}
.rule { width: 2px; height: 78px; margin: -2px 8px 0 10px; background: #5e2340; }
.rule-b { margin: -2px 4px 0 11px; background: #7c2322; }
.app.doc { width: 70px; }
.app.minimized { width: 78px; height: 58px; margin: 15px 0 0 -4px; }
.app.trash { width: 60px; height: 80px; margin: -7px 0 0 0; }
```
